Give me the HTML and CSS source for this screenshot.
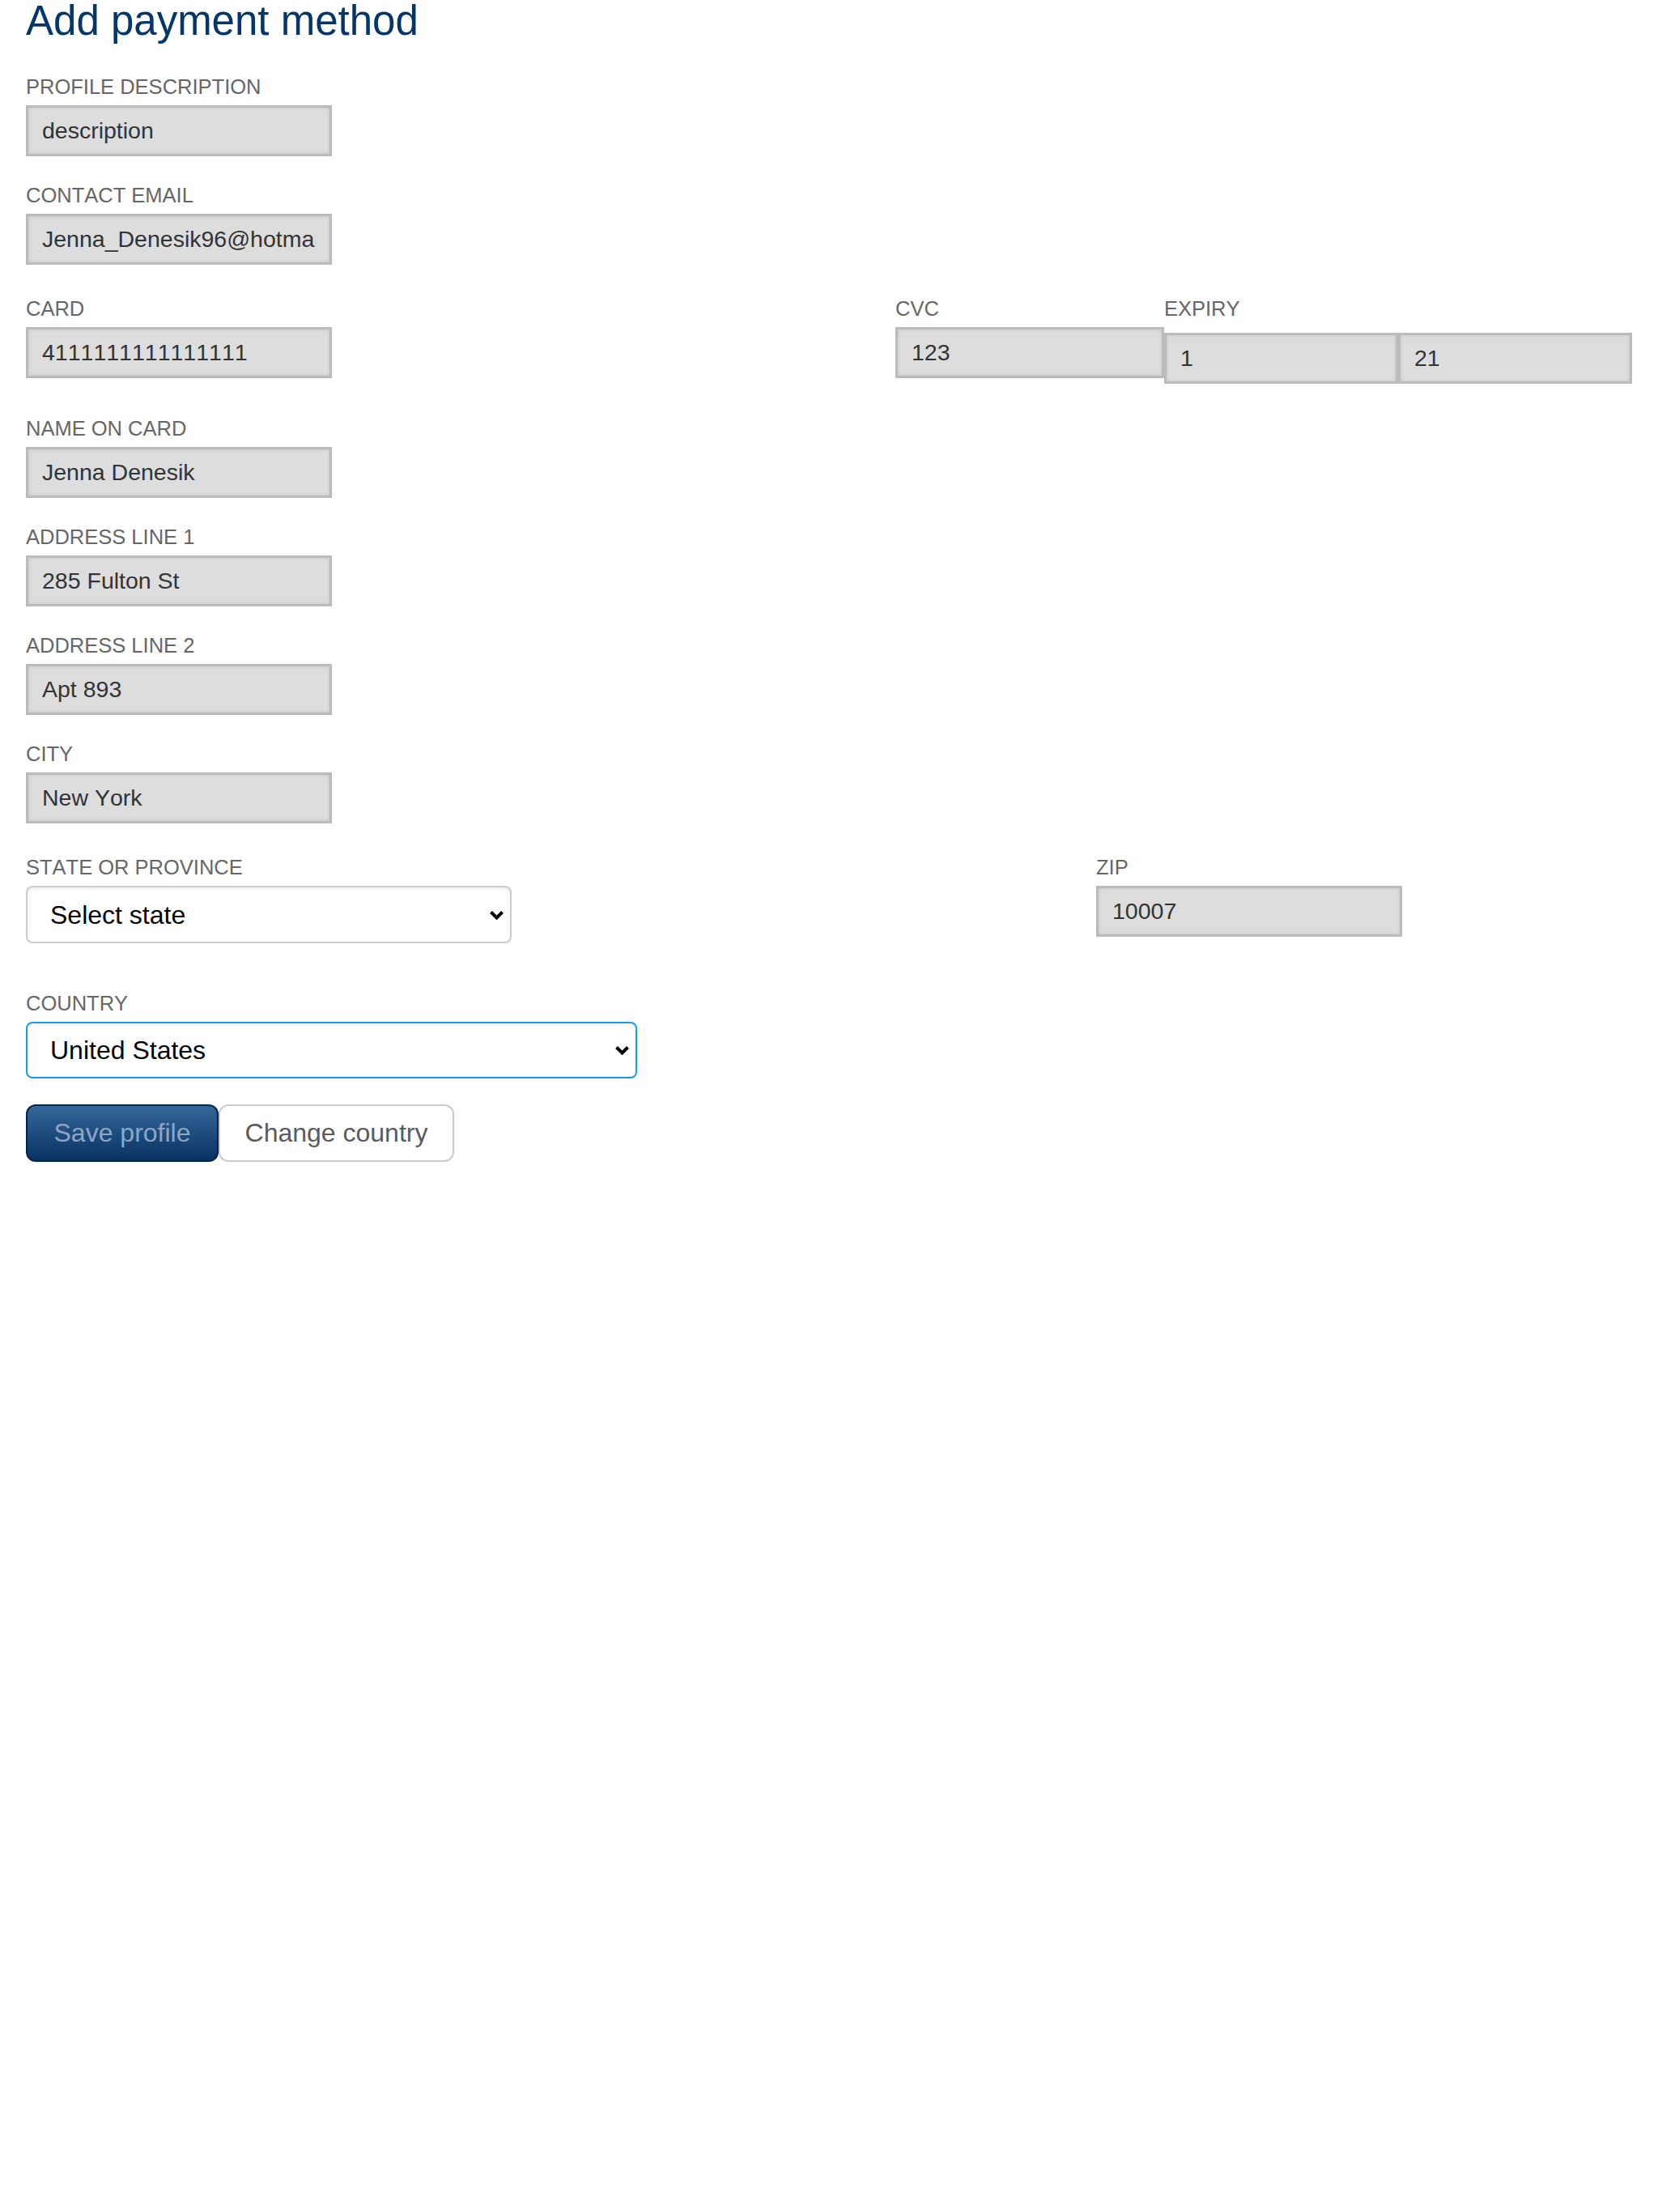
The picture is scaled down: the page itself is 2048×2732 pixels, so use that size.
FILE: index.html
```html
<!DOCTYPE html>
<html lang="en">
<head>
<meta charset="utf-8">
<title>Add payment method</title>
<link rel="stylesheet" href="styles.css">
</head>
<body>
<div class="page">
  <h1 class="title">Add payment method</h1>

  <div class="field">
    <label class="label">PROFILE DESCRIPTION</label>
    <input class="text-input" type="text" value="description">
  </div>

  <div class="field">
    <label class="label">CONTACT EMAIL</label>
    <input class="text-input" type="text" value="Jenna_Denesik96@hotmail.com">
  </div>

  <div class="row-card">
    <div class="col">
      <label class="label">CARD</label>
      <input class="text-input" type="text" value="4111111111111111">
    </div>
    <div class="col">
      <label class="label">CVC</label>
      <input class="text-input cvc-input" type="text" value="123">
    </div>
    <div class="col">
      <label class="label">EXPIRY</label>
      <div class="expiry">
        <input class="text-input expiry-input" type="text" value="1">
        <input class="text-input expiry-input" type="text" value="21">
      </div>
    </div>
  </div>

  <div class="field">
    <label class="label">NAME ON CARD</label>
    <input class="text-input" type="text" value="Jenna Denesik">
  </div>

  <div class="field">
    <label class="label">ADDRESS LINE 1</label>
    <input class="text-input" type="text" value="285 Fulton St">
  </div>

  <div class="field">
    <label class="label">ADDRESS LINE 2</label>
    <input class="text-input" type="text" value="Apt 893">
  </div>

  <div class="field">
    <label class="label">CITY</label>
    <input class="text-input" type="text" value="New York">
  </div>

  <div class="row-state">
    <div class="col">
      <label class="label">STATE OR PROVINCE</label>
      <div class="select-wrap state-wrap">
        <select class="select">
          <option>Select state</option>
        </select>
        <svg class="chevron" width="19" height="12" viewBox="0 0 19 12"><polyline points="2.5,2.5 9.5,9.5 16.5,2.5" fill="none" stroke="#000" stroke-width="4"/></svg>
      </div>
    </div>
    <div class="col">
      <label class="label">ZIP</label>
      <input class="text-input" type="text" value="10007">
    </div>
  </div>

  <div class="field-country">
    <label class="label">COUNTRY</label>
    <div class="select-wrap country-wrap">
      <select class="select select-focus">
        <option>United States</option>
      </select>
      <svg class="chevron" width="19" height="12" viewBox="0 0 19 12"><polyline points="2.5,2.5 9.5,9.5 16.5,2.5" fill="none" stroke="#000" stroke-width="4"/></svg>
    </div>
  </div>

  <div class="actions">
    <button class="btn btn-primary" type="button">Save profile</button>
    <button class="btn btn-secondary" type="button">Change country</button>
  </div>
</div>
</body>
</html>
```

FILE: styles.css
```css
* {
  font-kerning: none;
}

body {
  margin: 0;
  background: #fff;
  font-family: "Liberation Sans", Arial, sans-serif;
}

.page {
  display: flex;
  flex-direction: column;
  align-items: flex-start;
  padding: 0 32px;
}

.title {
  margin: 0 0 41px;
  font-size: 51px;
  line-height: 51px;
  font-weight: normal;
  color: #053669;
}

.label {
  display: block;
  font-size: 25.5px;
  line-height: 30px;
  color: #666;
  margin-bottom: 8px;
}

.field {
  margin-bottom: 33px;
}

.text-input {
  display: block;
  box-sizing: border-box;
  width: 378px;
  height: 63px;
  margin: 0;
  padding: 0 17px;
  border: 3px solid #bbb;
  border-radius: 0;
  background: #ddd;
  box-shadow: inset 0 0 4px rgba(0, 0, 0, 0.12);
  font-family: "Liberation Sans", Arial, sans-serif;
  font-size: 28.5px;
  color: #333;
  outline: none;
}

.row-card {
  display: grid;
  grid-template-columns: 1074px 332px 578px;
  align-items: start;
  margin-top: 6px;
  margin-bottom: 40px;
}

.cvc-input {
  width: 332px;
}

.expiry {
  display: flex;
  padding-top: 7px;
}

.expiry-input {
  width: 289px;
}

.row-state {
  display: grid;
  grid-template-columns: 1322px 662px;
  align-items: start;
  margin-top: 6px;
  margin-bottom: 59px;
}

.select-wrap {
  position: relative;
}

.state-wrap {
  width: 600px;
}

.country-wrap {
  width: 755px;
}

.select {
  display: block;
  box-sizing: border-box;
  width: 100%;
  height: 71px;
  margin: 0;
  padding: 0 50px 0 28px;
  -webkit-appearance: none;
  appearance: none;
  border: 2px solid #ccc;
  border-radius: 8px;
  background: #fff;
  box-shadow: inset 0 2px 4px rgba(0, 0, 0, 0.08);
  font-family: "Liberation Sans", Arial, sans-serif;
  font-size: 32px;
  color: #000;
  outline: none;
}

.select-focus {
  height: 70px;
  border-color: #179ee7;
}

.chevron {
  position: absolute;
  right: 9px;
  top: 50%;
  transform: translateY(-50%);
  pointer-events: none;
}

.actions {
  display: flex;
  margin-top: 32px;
}

.btn {
  box-sizing: border-box;
  height: 71px;
  margin: 0;
  padding: 0;
  border-radius: 12px;
  font-family: "Liberation Sans", Arial, sans-serif;
  font-size: 32px;
  cursor: pointer;
}

.btn-primary {
  width: 238px;
  border: 2px solid #062449;
  background: linear-gradient(#346799, #093263);
  color: #8ca7c6;
}

.btn-secondary {
  width: 291px;
  border: 2px solid #ccc;
  background: #fff;
  color: #5a5a5a;
}
```
